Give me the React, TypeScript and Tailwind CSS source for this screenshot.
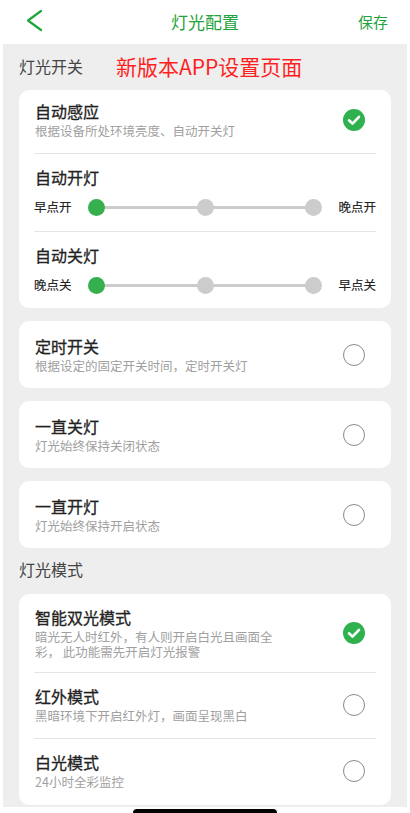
import type { ReactNode } from 'react'

const GREEN = '#2fb14d'

function CheckOn() {
  return (
    <svg width="22" height="22" viewBox="0 0 22 22" className="shrink-0">
      <circle cx="11" cy="11" r="11" fill={GREEN} />
      <path d="M6 11.3 L9.5 14.6 L16 7.8" fill="none" stroke="#fff" strokeWidth="2.6" strokeLinecap="round" strokeLinejoin="round" />
    </svg>
  )
}

function CheckOff() {
  return <div className="w-[22px] h-[22px] shrink-0 rounded-full border border-[#8a8a8a]" />
}

function Slider({ left, right }: { left: string; right: string }) {
  return (
    <div className="flex items-center h-[20px]">
      <span className="w-[54px] shrink-0 text-[12.5px] text-[#222] [-webkit-text-stroke:0.15px_#222]">{left}</span>
      <div className="relative w-[234px] h-[17px]">
        <div className="absolute left-[8px] right-[8px] top-[7px] h-[3px] bg-[#cccccc]" />
        <div className="relative flex justify-between">
          <div className="w-[17px] h-[17px] rounded-full bg-[#36b04f]" />
          <div className="w-[17px] h-[17px] rounded-full bg-[#cccccc]" />
          <div className="w-[17px] h-[17px] rounded-full bg-[#cccccc]" />
        </div>
      </div>
      <span className="ml-auto text-[12.5px] text-[#222] [-webkit-text-stroke:0.15px_#222]">{right}</span>
    </div>
  )
}

function Title({ children }: { children: ReactNode }) {
  return <div className="text-[16px] leading-[20px] text-[#222] [-webkit-text-stroke:0.3px_#222]">{children}</div>
}

function Sub({ children }: { children: ReactNode }) {
  return <div className="mt-[2px] text-[12.5px] leading-[15px] text-[#a0a0a0] max-w-[245px]">{children}</div>
}

function OptionCard({ title, sub }: { title: string; sub: string }) {
  return (
    <div className="mt-[13px] bg-white rounded-[10px] flex items-center pl-[16px] pr-[26px] pt-[15px] pb-[15px]">
      <div className="flex-1">
        <Title>{title}</Title>
        <Sub>{sub}</Sub>
      </div>
      <CheckOff />
    </div>
  )
}

const MODES = [
  { title: '智能双光模式', sub: '暗光无人时红外，有人则开启白光且画面全彩， 此功能需先开启灯光报警', on: true, pt: 'pt-[13px]', pb: 'pb-[13px]' },
  { title: '红外模式', sub: '黑暗环境下开启红外灯，画面呈现黑白', on: false, pt: 'pt-[13px]', pb: 'pb-[15px]' },
  { title: '白光模式', sub: '24小时全彩监控', on: false, pt: 'pt-[13px]', pb: 'pb-[16px]' },
]

export default function App() {
  return (
    <div className="w-[410px] h-[813px] overflow-hidden bg-white" style={{ fontFamily: '"Noto Sans CJK SC", "Noto Sans", sans-serif' }}>
      {/* header */}
      <div className="relative h-[44px] flex items-center justify-center">
        <svg width="20" height="24" viewBox="0 0 20 24" className="absolute left-[24px] top-[9px]">
          <polyline points="17,2 4,11.5 17,21" fill="none" stroke="#1ea83c" strokeWidth="2.2" strokeLinecap="round" strokeLinejoin="round" />
        </svg>
        <span className="text-[17px] text-[#23a33d]">灯光配置</span>
        <span className="absolute right-[22px] text-[15px] text-[#23a33d]">保存</span>
      </div>

      <div className="mx-[3px] bg-[#eeeeee] px-[16px] pb-[2px]">
        <div className="pt-[10px] pb-[12px] flex items-center h-[46px]">
          <span className="text-[16px] leading-[24px] text-[#444]">灯光开关</span>
          <span className="ml-[33px] text-[21px] leading-[24px] text-[#ff1f1f]">新版本APP设置页面</span>
        </div>

        <div className="bg-white rounded-[10px]">
          <div className="flex items-center pl-[16px] pr-[26px] pt-[11px] pb-[15px]">
            <div className="flex-1">
              <Title>自动感应</Title>
              <Sub>根据设备所处环境亮度、自动开关灯</Sub>
            </div>
            <CheckOn />
          </div>
          <div className="mx-[15px] h-px bg-[#e4e4e4]" />
          <div className="px-[15px] pt-[13px] pb-[14px]">
            <div className="pl-px"><Title>自动开灯</Title></div>
            <div className="mt-[10px]"><Slider left="早点开" right="晚点开" /></div>
          </div>
          <div className="mx-[15px] h-px bg-[#e4e4e4]" />
          <div className="px-[15px] pt-[13px] pb-[13px]">
            <div className="pl-px"><Title>自动关灯</Title></div>
            <div className="mt-[10px]"><Slider left="晚点关" right="早点关" /></div>
          </div>
        </div>

        <OptionCard title="定时开关" sub="根据设定的固定开关时间，定时开关灯" />
        <OptionCard title="一直关灯" sub="灯光始终保持关闭状态" />
        <OptionCard title="一直开灯" sub="灯光始终保持开启状态" />

        <div className="pt-[9px] pb-[13px]">
          <span className="text-[16px] leading-[24px] text-[#444]">灯光模式</span>
        </div>

        <div className="bg-white rounded-[10px]">
          {MODES.map((m, i) => (
            <div key={m.title}>
              {i > 0 && <div className="mx-[15px] h-px bg-[#e4e4e4]" />}
              <div className={`flex items-center pl-[16px] pr-[26px] ${m.pt} ${m.pb}`}>
                <div className="flex-1">
                  <Title>{m.title}</Title>
                  <Sub>{m.sub}</Sub>
                </div>
                {m.on ? <CheckOn /> : <CheckOff />}
              </div>
            </div>
          ))}
        </div>
      </div>

      <div className="flex justify-center mt-[2px]">
        <div className="w-[144px] h-[8px] rounded-full bg-black" />
      </div>
    </div>
  )
}
